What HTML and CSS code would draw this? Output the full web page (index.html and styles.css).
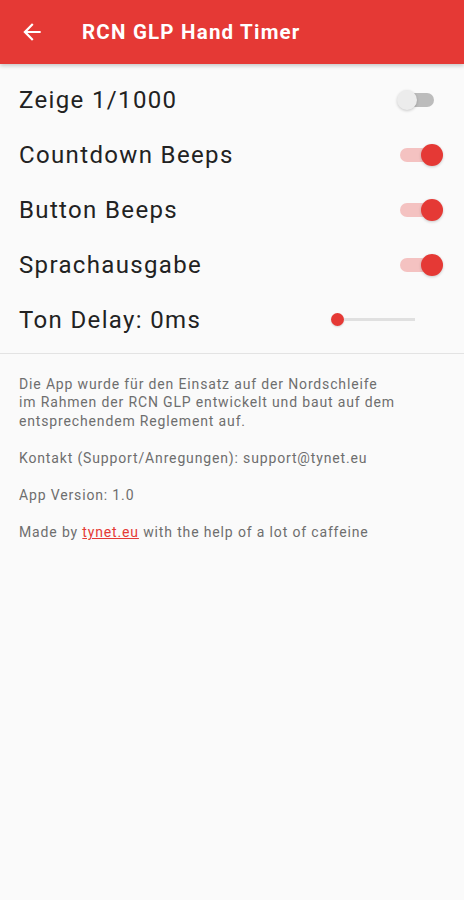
FILE: index.html
```html
<!DOCTYPE html>
<html lang="de">
<head>
    <meta charset="UTF-8">
    <meta name="viewport" content="width=device-width, initial-scale=1.0">
    <title>RCN GLP Hand Timer</title>
    <link rel="stylesheet" href="styles.css">
</head>
<body>
    <header class="appbar">
        <svg class="back" viewBox="0 0 24 24" width="26" height="26">
            <path d="M20 11H7.83l5.59-5.59L12 4l-8 8 8 8 1.41-1.41L7.83 13H20v-2z" fill="#fff"/>
        </svg>
        <h1>RCN GLP Hand Timer</h1>
    </header>

    <div class="settings">
        <div class="row">
            <span>Zeige 1/1000</span>
            <div class="switch"><div class="track"></div><div class="thumb"></div></div>
        </div>
        <div class="row">
            <span>Countdown Beeps</span>
            <div class="switch on"><div class="track"></div><div class="thumb"></div></div>
        </div>
        <div class="row">
            <span>Button Beeps</span>
            <div class="switch on"><div class="track"></div><div class="thumb"></div></div>
        </div>
        <div class="row">
            <span>Sprachausgabe</span>
            <div class="switch on"><div class="track"></div><div class="thumb"></div></div>
        </div>
        <div class="row">
            <span>Ton Delay: 0ms</span>
            <div class="slider"><div class="slider-thumb"></div><div class="slider-track"></div></div>
        </div>
    </div>

    <div class="info">
        <p>Die App wurde für den Einsatz auf der Nordschleife<br>im Rahmen der RCN GLP entwickelt und baut auf dem<br>entsprechendem Reglement auf.</p>
        <p>Kontakt (Support/Anregungen): support@tynet.eu</p>
        <p>App Version: 1.0</p>
        <p>Made by <a href="#">tynet.eu</a> with the help of a lot of caffeine</p>
    </div>
</body>
</html>
```

FILE: styles.css
```css
body {
    margin: 0;
    font-family: Roboto, "Noto Sans", sans-serif;
    background-color: #fafafa;
    height: 900px;
}
.appbar {
    height: 64px;
    background-color: #e53935;
    display: flex;
    align-items: center;
    padding-left: 19px;
    box-shadow: 0 2px 4px rgba(0,0,0,0.2);
}
.appbar .back {
    display: block;
    margin-right: 37px;
}
.appbar h1 {
    margin: 0;
    color: white;
    font-size: 20.5px;
    font-weight: 700;
    letter-spacing: 1.2px;
}
.settings {
    padding: 9px 0 6px;
    border-bottom: 1px solid #e3e3e3;
}
.row {
    height: 54.8px;
    display: flex;
    align-items: center;
    justify-content: space-between;
    padding: 0 23px 0 19px;
    font-size: 24px;
    letter-spacing: 1.35px;
    color: #222;
}
.switch {
    position: relative;
    width: 44px;
    height: 22px;
}
.switch .track {
    position: absolute;
    left: 3px;
    top: 4px;
    width: 34px;
    height: 14px;
    border-radius: 7px;
    background-color: #bcbcbc;
}
.switch .thumb {
    position: absolute;
    left: 0;
    top: 1px;
    width: 20px;
    height: 20px;
    border-radius: 50%;
    background-color: #ececec;
    box-shadow: 0 1px 3px rgba(0,0,0,0.2);
}
.switch.on .track {
    background-color: #f4c2c1;
}
.switch.on .thumb {
    left: 24px;
    top: 0;
    width: 22px;
    height: 22px;
    background-color: #e53935;
}
.slider {
    width: 84px;
    display: flex;
    align-items: center;
    margin-right: 26px;
}
.slider-thumb {
    width: 13px;
    height: 13px;
    border-radius: 50%;
    background-color: #e53935;
    box-shadow: 0 1px 2px rgba(0,0,0,0.15);
}
.slider-track {
    flex: 1;
    height: 3px;
    background-color: #e0e0e0;
}
.info {
    padding: 21px 19px;
    font-size: 14px;
    line-height: 18.5px;
    letter-spacing: 0.85px;
    color: #6e6e6e;
}
.info p {
    margin: 0 0 18.5px;
}
.info a {
    color: #e53935;
}
```
